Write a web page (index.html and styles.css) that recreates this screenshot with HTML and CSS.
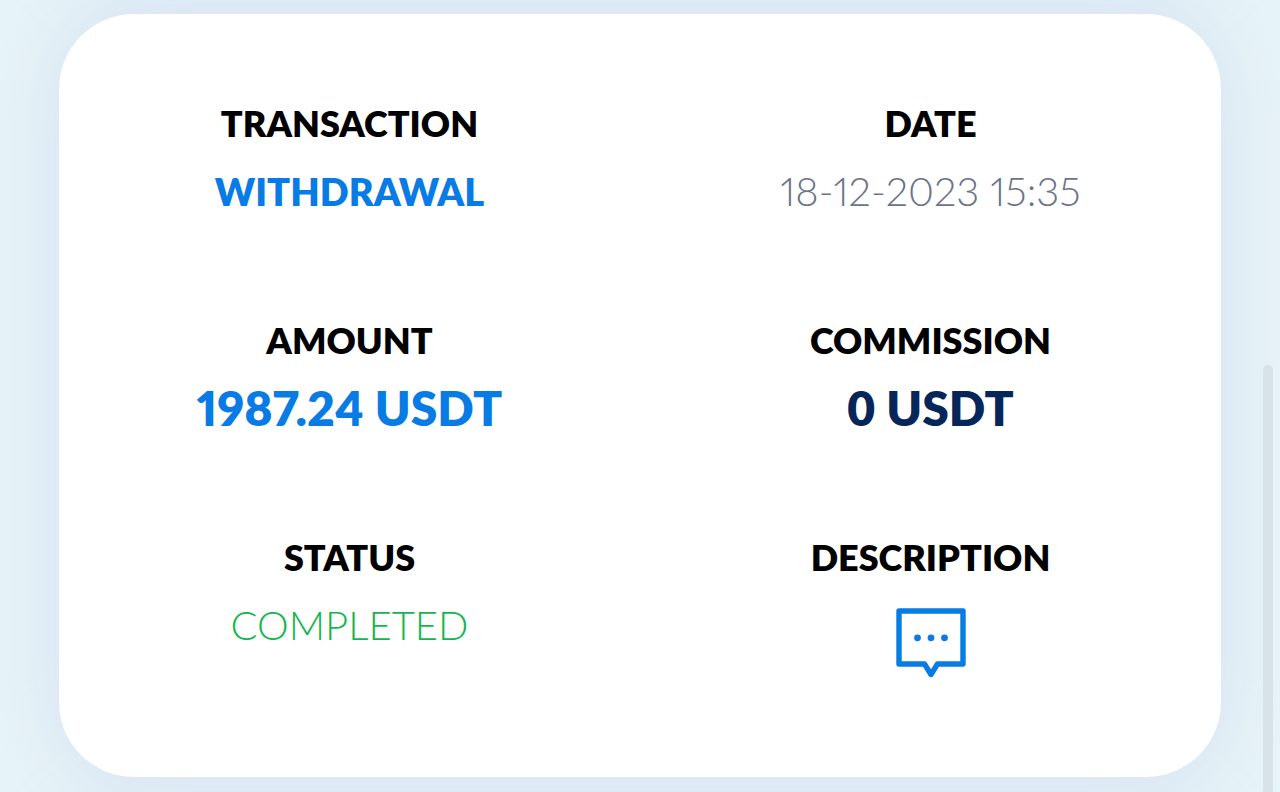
FILE: index.html
```html
<!DOCTYPE html>
<html lang="en">
<head>
<meta charset="utf-8">
<meta name="viewport" content="width=device-width, initial-scale=1">
<title>Transaction</title>
<link rel="stylesheet" href="styles.css">
</head>
<body>
<main class="page">
  <dl class="card">
    <div class="field">
      <dt class="label">TRANSACTION</dt>
      <dd class="value value-type">WITHDRAWAL</dd>
    </div>
    <div class="field">
      <dt class="label">DATE</dt>
      <dd class="value value-date">18-12-2023 15:35</dd>
    </div>
    <div class="field">
      <dt class="label">AMOUNT</dt>
      <dd class="value value-amount">1987.24 USDT</dd>
    </div>
    <div class="field">
      <dt class="label">COMMISSION</dt>
      <dd class="value value-fee">0 USDT</dd>
    </div>
    <div class="field">
      <dt class="label">STATUS</dt>
      <dd class="value value-status">COMPLETED</dd>
    </div>
    <div class="field">
      <dt class="label">DESCRIPTION</dt>
      <dd class="value value-note">
        <button class="note-button" type="button" aria-label="Show description">
          <svg width="70" height="70" viewBox="0 0 70 70" fill="none" aria-hidden="true">
            <path d="M3 3H67V56H41.500L35 66.500L28.500 56H3Z" stroke="currentColor" stroke-width="5.400" stroke-linejoin="round"/>
            <g fill="currentColor"><circle cx="21.500" cy="29.800" r="3.400"/><circle cx="35" cy="29.800" r="3.400"/><circle cx="48.500" cy="29.800" r="3.400"/></g>
          </svg>
        </button>
      </dd>
    </div>
  </dl>
</main>
<div class="scroll-thumb"></div>
</body>
</html>
```
FILE: styles.css
```css
* {
  box-sizing: border-box;
}

body {
  margin: 0;
  background: #e7f3f8;
  font-family: Lato, "Open Sans", sans-serif;
}

.page {
  min-height: 100vh;
  padding: 14px 59px 15px;
  overflow: hidden;
}

.card {
  display: grid;
  grid-template-columns: 1fr 1fr;
  row-gap: 99px;
  margin: 0;
  padding: 87px 0 99px;
  border-radius: 75px;
  background: #fff;
  box-shadow:
    0 0 70px rgba(200, 213, 236, 0.6),
    0 790px 70px rgba(200, 213, 236, 0.25),
    0 -790px 70px rgba(200, 213, 236, 0.25);
}

.field {
  display: flex;
  flex-direction: column;
  align-items: center;
  gap: 18px;
}

.label {
  color: #000;
  font-size: 36px;
  font-weight: 800;
  line-height: 44px;
}

.value {
  margin: 0;
  font-size: 40px;
  line-height: 56px;
}

.value-type {
  color: #087be5;
  font-size: 38px;
  font-weight: 800;
}

.value-date {
  color: #6a7388;
  font-weight: 300;
  font-variant-numeric: proportional-nums;
}

.value-amount,
.value-fee {
  font-size: 48px;
  font-weight: 800;
}

.value-amount {
  color: #087be5;
  font-variant-numeric: proportional-nums;
}

.value-fee {
  color: #06265a;
}

.value-status {
  color: #14b64c;
  font-weight: 300;
}

.value-note {
  padding-top: 11px;
}

.note-button {
  display: block;
  padding: 0;
  border: 0;
  background: none;
  color: #087be5;
  cursor: pointer;
}

.note-button svg {
  display: block;
}

.scroll-thumb {
  position: fixed;
  top: 365px;
  right: 7px;
  bottom: -10px;
  width: 10px;
  border-radius: 5px;
  background: #d8e3e9;
}
```
